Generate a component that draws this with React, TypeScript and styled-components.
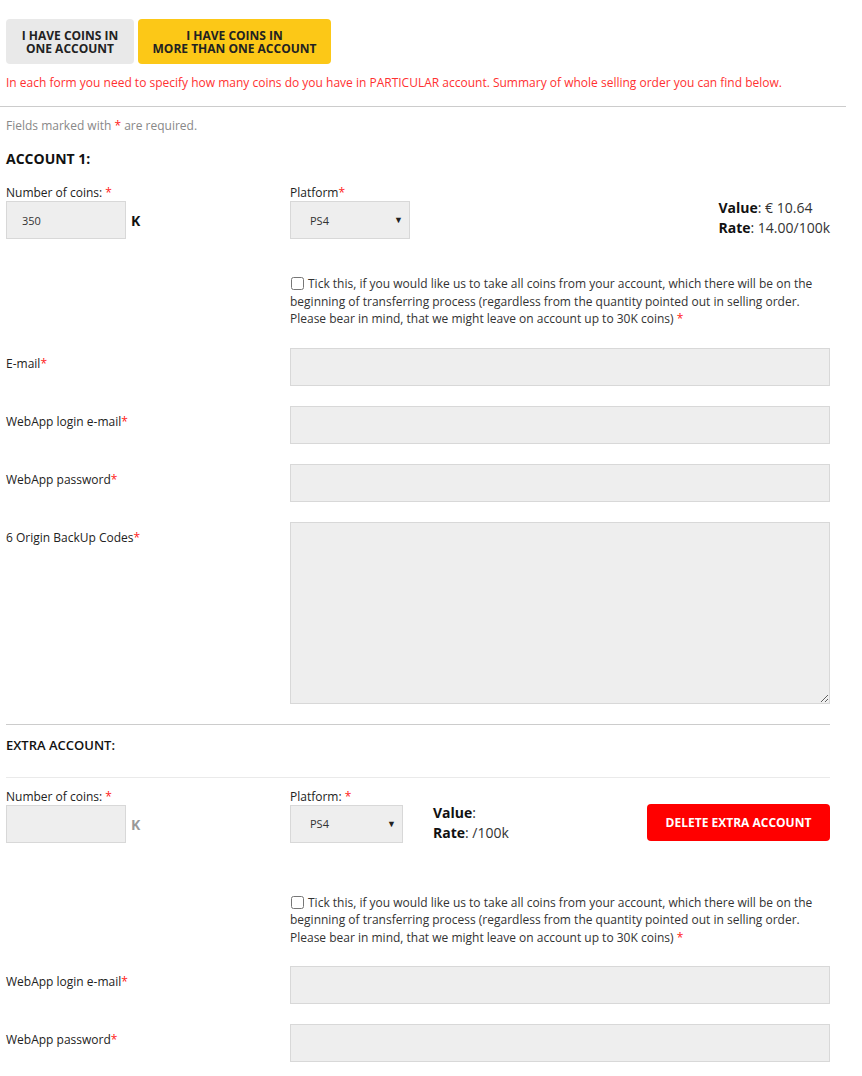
import React, { FC } from 'react';
import styled, { createGlobalStyle } from 'styled-components';

const GlobalStyle = createGlobalStyle`
  body {
    margin: 0;
    background: #fff;
    font-family: "Open Sans", "Liberation Sans", Arial, sans-serif;
    color: #333;
  }
`;

const Page = styled.div`
  width: 846px;
  padding-top: 19px;
`;

const ModeBar = styled.div`
  display: flex;
  gap: 4px;
  padding-left: 6px;
`;

const ModeButton = styled.button<{ active?: boolean; width: number }>`
  width: ${props => props.width}px;
  height: 45px;
  padding: 0;
  border: none;
  border-radius: 4px;
  background: ${props => (props.active ? '#fcc817' : '#e9e9e9')};
  color: #222;
  font-family: inherit;
  font-size: 12px;
  font-weight: 700;
  line-height: 13px;
  text-transform: uppercase;
  text-align: center;
  cursor: pointer;
`;

const Note = styled.p`
  margin: 10px 0 0;
  padding-left: 6px;
  font-size: 12px;
  line-height: 17px;
  color: #ff3131;
`;

const TopRule = styled.hr`
  margin: 15px 0 0;
  border: none;
  border-top: 1px solid #ccc;
`;

const Form = styled.div`
  padding: 0 16px 0 6px;
`;

const Hint = styled.p`
  margin: 11px 0 0;
  font-size: 12px;
  line-height: 16px;
  color: #888;
`;

const Req = styled.span`
  color: #ff2020;
`;

const SectionTitle = styled.h3<{ light?: boolean }>`
  margin: ${props => (props.light ? '10px' : '15px')} 0 0;
  font-size: ${props => (props.light ? '13px' : '14px')};
  font-weight: ${props => (props.light ? 600 : 700)};
  line-height: 20px;
  color: #111;
  text-transform: uppercase;
`;

const Rule = styled.hr<{ soft?: boolean }>`
  margin: ${props => (props.soft ? '22px 0 0' : '20px 0 0')};
  border: none;
  border-top: 1px solid ${props => (props.soft ? '#eaeaea' : '#ccc')};
`;

const CoinsRow = styled.div<{ top: number }>`
  display: grid;
  grid-template-columns: 284px 1fr;
  margin-top: ${props => props.top}px;
`;

const FieldLabel = styled.div`
  font-size: 12px;
  line-height: 17px;
  color: #222;
`;

const InlineGroup = styled.div`
  display: flex;
  align-items: center;
`;

const Box = styled.input`
  box-sizing: border-box;
  width: 120px;
  height: 38px;
  padding: 0 15px;
  border: 1px solid #d8d8d8;
  background: #eee;
  font-family: inherit;
  font-size: 11px;
  color: #333;
  outline: none;
`;

const Unit = styled.span<{ muted?: boolean }>`
  margin-left: 5px;
  margin-top: 1px;
  font-size: 14px;
  font-weight: 700;
  color: ${props => (props.muted ? '#999' : '#111')};
`;

const SelectWrap = styled.div<{ width: number }>`
  position: relative;
  width: ${props => props.width}px;
  height: 38px;
`;

const Select = styled.select`
  box-sizing: border-box;
  width: 100%;
  height: 100%;
  padding: 0 0 0 19px;
  border: 1px solid #d8d8d8;
  border-radius: 0;
  background: #eee;
  appearance: none;
  font-family: inherit;
  font-size: 11px;
  color: #333;
  outline: none;
`;

const Caret = styled.span`
  position: absolute;
  right: 7px;
  top: 12px;
  font-size: 9px;
  color: #222;
  pointer-events: none;
`;

const PlatformCell = styled.div`
  display: flex;
  align-items: flex-start;
`;

const Summary = styled.div<{ pad: number; gap?: number }>`
  padding-top: ${props => props.pad}px;
  margin-left: ${props => props.gap ?? 0}px;
  font-size: 14px;
  line-height: 20px;
  color: #333;
  b {
    font-weight: 700;
    color: #111;
  }
`;

const Spacer = styled.div`
  flex: 1;
`;

const DeleteButton = styled.button`
  margin-top: 16px;
  width: 183px;
  height: 37px;
  border: none;
  border-radius: 4px;
  background: #ff0000;
  color: #fff;
  font-family: inherit;
  font-size: 12px;
  font-weight: 700;
  text-transform: uppercase;
  cursor: pointer;
`;

const TickRow = styled.div<{ top: number }>`
  margin: ${props => props.top}px 0 0 284px;
  font-size: 12px;
  line-height: 17.5px;
  color: #333;
  label {
    display: block;
  }
  input {
    width: 13px;
    height: 13px;
    margin: 0 4px 0 1px;
    vertical-align: -2px;
    accent-color: #888;
  }
`;

const FieldRow = styled.div`
  display: grid;
  grid-template-columns: 284px 1fr;
  margin-top: 20px;
`;

const RowLabel = styled.label`
  padding-top: 7px;
  font-size: 12px;
  line-height: 17px;
  color: #222;
`;

const TextBox = styled.input`
  box-sizing: border-box;
  width: 100%;
  height: 38px;
  border: 1px solid #d8d8d8;
  background: #eee;
  outline: none;
`;

const CodesBox = styled.textarea`
  box-sizing: border-box;
  width: 100%;
  height: 182px;
  border: 1px solid #d8d8d8;
  background: #eee;
  outline: none;
  display: block;
`;

const TICK_TEXT =
  'Tick this, if you would like us to take all coins from your account, which there will be on the beginning of transferring process (regardless from the quantity pointed out in selling order. Please bear in mind, that we might leave on account up to 30K coins)';

const TickAll: FC<{ top: number }> = ({ top }) => (
  <TickRow top={top}>
    <label>
      <input type="checkbox" />
      {TICK_TEXT} <Req>*</Req>
    </label>
  </TickRow>
);

const Field: FC<{ label: string; area?: boolean }> = ({ label, area }) => (
  <FieldRow>
    <RowLabel>
      {label}
      <Req>*</Req>
    </RowLabel>
    {area ? <CodesBox /> : <TextBox type="text" />}
  </FieldRow>
);

const PlatformSelect: FC<{ width: number }> = ({ width }) => (
  <SelectWrap width={width}>
    <Select defaultValue="PS4">
      <option>PS4</option>
      <option>XBOX ONE</option>
      <option>PC</option>
    </Select>
    <Caret>▼</Caret>
  </SelectWrap>
);

const App: FC = () => (
  <Page>
    <GlobalStyle />
    <ModeBar>
      <ModeButton width={128}>
        I have coins in
        <br />
        one account
      </ModeButton>
      <ModeButton active width={193}>
        I have coins in
        <br />
        more than one account
      </ModeButton>
    </ModeBar>
    <Note>
      In each form you need to specify how many coins do you have in PARTICULAR account. Summary of whole selling
      order you can find below.
    </Note>
    <TopRule />

    <Form>
      <Hint>
        Fields marked with <Req>*</Req> are required.
      </Hint>
      <SectionTitle>Account 1:</SectionTitle>

      <CoinsRow top={15}>
        <div>
          <FieldLabel>
            Number of coins: <Req>*</Req>
          </FieldLabel>
          <InlineGroup>
            <Box defaultValue="350" />
            <Unit>K</Unit>
          </InlineGroup>
        </div>
        <PlatformCell>
          <div>
            <FieldLabel>
              Platform<Req>*</Req>
            </FieldLabel>
            <PlatformSelect width={120} />
          </div>
          <Spacer />
          <Summary pad={14}>
            <div>
              <b>Value</b>: € 10.64
            </div>
            <div>
              <b>Rate</b>: 14.00/100k
            </div>
          </Summary>
        </PlatformCell>
      </CoinsRow>

      <TickAll top={36} />
      <Field label="E-mail" />
      <Field label="WebApp login e-mail" />
      <Field label="WebApp password" />
      <Field label="6 Origin BackUp Codes" area />

      <Rule />
      <SectionTitle light>Extra account:</SectionTitle>
      <Rule soft />

      <CoinsRow top={10}>
        <div>
          <FieldLabel>
            Number of coins: <Req>*</Req>
          </FieldLabel>
          <InlineGroup>
            <Box />
            <Unit muted>K</Unit>
          </InlineGroup>
        </div>
        <PlatformCell>
          <div>
            <FieldLabel>
              Platform: <Req>*</Req>
            </FieldLabel>
            <PlatformSelect width={113} />
          </div>
          <Summary pad={15} gap={30}>
            <div>
              <b>Value</b>:
            </div>
            <div>
              <b>Rate</b>: /100k
            </div>
          </Summary>
          <Spacer />
          <DeleteButton>Delete extra account</DeleteButton>
        </PlatformCell>
      </CoinsRow>

      <TickAll top={51} />
      <Field label="WebApp login e-mail" />
      <Field label="WebApp password" />
    </Form>
  </Page>
);

export default App;
